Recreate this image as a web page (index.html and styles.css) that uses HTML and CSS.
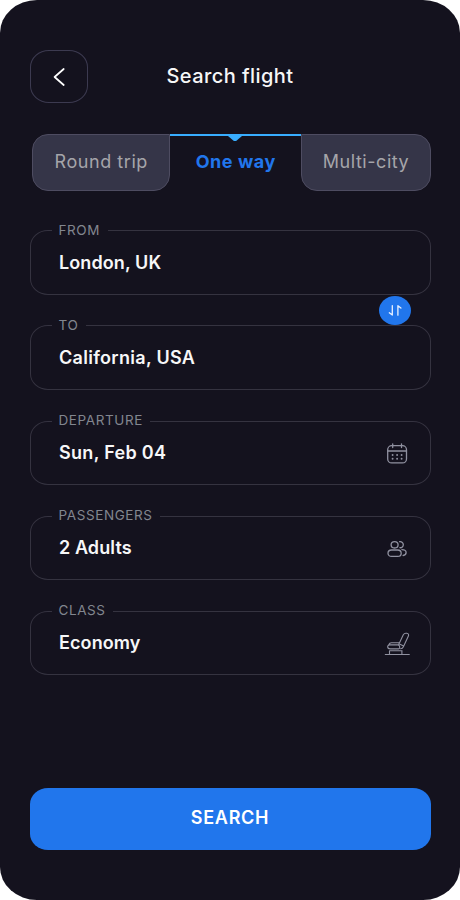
FILE: index.html
```html
<!DOCTYPE html>
<html lang="en">
<head>
<meta charset="utf-8">
<title>Search flight</title>
<link rel="stylesheet" href="styles.css">
</head>
<body>
<main class="screen">
  <header class="header">
    <button class="back" aria-label="Back">
      <svg width="12" height="18" viewBox="0 0 12 18"><path d="M10.700 1 1.600 9l9.100 8"/></svg>
    </button>
    <h1 class="title">Search flight</h1>
  </header>
  <nav class="tabs">
    <button class="tab tab-first">Round trip</button>
    <button class="tab tab-active">One way</button>
    <button class="tab tab-last">Multi-city</button>
  </nav>
  <form class="fields">
    <fieldset class="field">
      <legend>FROM</legend>
      <span class="value">London, UK</span>
      <button type="button" class="swap" aria-label="Swap">
        <svg width="32" height="29" viewBox="0 0 32 29"><path d="M13.300 9.600v9.500L10.300 16.800M18.900 19.200V9.700l3 2.300"/></svg>
      </button>
    </fieldset>
    <fieldset class="field">
      <legend>TO</legend>
      <span class="value wide">California, USA</span>
    </fieldset>
    <fieldset class="field">
      <legend>DEPARTURE</legend>
      <span class="value wide">Sun, Feb 04</span>
      <svg class="icon" width="26" height="24" viewBox="0 0 26 24">
        <rect x="3.700" y="3.700" width="18.800" height="17.200" rx="4"/>
        <path d="M3.700 9h18.800M8.700 1.800v3.800M17.500 1.800v3.800"/>
        <path class="dots" d="M8.600 13h.01M13.100 13h.01M17.600 13h.01M8.600 16.800h.01M13.100 16.800h.01M17.600 16.800h.01"/>
      </svg>
    </fieldset>
    <fieldset class="field">
      <legend>PASSENGERS</legend>
      <span class="value">2 Adults</span>
      <svg class="icon" width="26" height="24" viewBox="0 0 26 24">
        <ellipse cx="10.600" cy="7.800" rx="3.500" ry="3.200"/>
        <rect x="4" y="13" width="13.200" height="6.400" rx="3.500" ry="3.200"/>
        <path d="M15.600 4.700c2.200-.3 3.700 1.200 3.700 3s-1.500 3.300-3.400 3M17.900 12.600c2.600 0 4.200 1.300 4.200 3 0 1.600-1.100 2.700-3 2.900"/>
      </svg>
    </fieldset>
    <fieldset class="field">
      <legend>CLASS</legend>
      <span class="value">Economy</span>
      <svg class="icon seat" width="26" height="24" viewBox="0 0 26 24">
        <path d="M1.300 22.500h24M5.500 19v3.300M17.900 19v3.300M5.500 18.700h12.600"/>
        <path d="M14.500 16.900H6.300c-3.500 0-3.300-4-.8-4h8.500c2 0 2.300 4 .5 4M4.800 12.600c.5-1.400 1.300-1.900 2.600-1.900h7.600M14.800 12.200l4.500-9.500c.8-1.400 1.700-1.700 3.400-1.400 1.800.3 2.300 1.200 1.700 2.800l-5 10.600c-.6 1.400-1.300 1.900-2.800 2M16 12.300l3.100 1.500"/>
      </svg>
    </fieldset>
  </form>
  <button class="search">SEARCH</button>
</main>
</body>
</html>
```
FILE: styles.css
```css
* { box-sizing: border-box; }
body { margin: 0; background: #fff; font-family: Inter, "Liberation Sans", sans-serif; }
button { padding: 0; margin: 0; border: 0; background: none; font: inherit; color: inherit; letter-spacing: inherit; }
svg { display: block; fill: none; stroke-linecap: round; stroke-linejoin: round; }
.screen {
  width: 460px; height: 900px; padding: 50px 29.5px;
  background: #14121e; border-radius: 37px / 33px;
  display: flex; flex-direction: column; color: #f7f7f8;
}
.header { display: grid; grid-template-columns: 58px 1fr 58px; align-items: center; height: 53px; }
.back {
  width: 58px; height: 53px; border: 1px solid #3c3a50; border-radius: 19px / 17px;
  display: grid; place-items: center;
}
.back svg { stroke: #fff; stroke-width: 1.7; }
.title { margin: 0; padding-bottom: 1px; text-align: center; font-size: 20px; line-height: 24px; font-weight: 500; letter-spacing: .45px; }
.tabs {
  display: grid; grid-template-columns: 138.5px 130.5px 130px; height: 57px; margin: 31px 0 0 2px;
  font-size: 18px; line-height: 24px; letter-spacing: .55px;
}
.tab { background: #353548; border: 1px solid #4e4c61; color: #a5a5aa; padding: 0 0 1px 1px; }
.tab-first { border-radius: 16px 0 16px 16px; }
.tab-last { border-radius: 0 16px 16px 16px; }
.tab-active { position: relative; background: none; border: 0; border-top: 2px solid #38adff; color: #2176ec; font-weight: 700; padding-bottom: 2px; }
.tab-active::after {
  content: ""; position: absolute; top: 0; left: 58px; width: 14px; height: 5px;
  background: #38adff; clip-path: polygon(0 0, 100% 0, 58% 100%, 42% 100%);
}
.fields { display: flex; flex-direction: column; gap: 23.2px; margin-top: 32px; }
.field {
  position: relative; margin: 0; min-width: 0; height: 72px; padding: 11px 20px 0 28.5px;
  border: 1px solid #353340; border-radius: 18px / 16px;
  display: flex; align-items: center; justify-content: space-between;
}
.field legend {
  margin-left: -7.500px; padding: 0 7.500px 0 7px; height: 16px;
  font-size: 13.500px; line-height: 15.500px; letter-spacing: .6px; color: #82868f;
}
.value { font-size: 18px; line-height: 26px; font-weight: 600; letter-spacing: .1px; white-space: nowrap; }
.wide { letter-spacing: .3px; }
.icon { stroke: #9091a0; stroke-width: 1.3; position: relative; top: 1px; }
.icon .dots { stroke-width: 1.9; }
.seat { stroke-width: 1.1; }
.swap { position: absolute; z-index: 1; top: 57px; right: 18.500px; width: 32px; height: 29px; border-radius: 50%; background: #2176ec; }
.swap svg { stroke: #e8f1ff; stroke-width: 1.3; }
.search {
  margin-top: 113px; height: 62px; border-radius: 18px / 16px; background: #2176ec;
  color: #fff; font-size: 18px; line-height: 24px; font-weight: 600; letter-spacing: .7px; padding-bottom: 3px;
}
```
